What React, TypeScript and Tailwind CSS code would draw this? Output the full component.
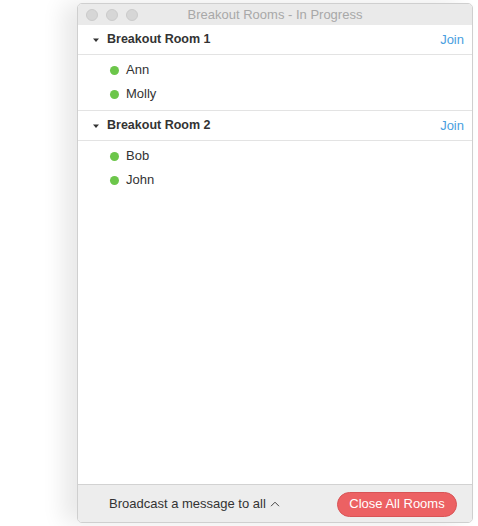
const font = { fontFamily: '"Liberation Sans", Arial, sans-serif' };

const rooms = [
  { name: 'Breakout Room 1', members: ['Ann', 'Molly'] },
  { name: 'Breakout Room 2', members: ['Bob', 'John'] },
];

function Caret() {
  return (
    <svg width="8" height="6" viewBox="0 0 8 6" className="mr-[7px]">
      <path d="M1 1.5h6L4 5z" fill="#333" />
    </svg>
  );
}

export default function App() {
  return (
    <div className="w-[478px] h-[526px] bg-white pt-[3px] pl-[77px]" style={font}>
      <div className="w-[396px] h-[520px] flex flex-col rounded-[5px] overflow-hidden border border-[#cfcfcf] bg-white shadow-[-14px_0_22px_rgba(0,0,0,0.09)]">
        {/* title bar */}
        <div className="relative h-[21px] bg-[#eaeaea] flex items-center shrink-0">
          <div className="flex gap-[8px] pl-[8px]">
            <span className="w-[12px] h-[12px] rounded-full bg-[#d6d6d6] border border-[#cbcbcb]" />
            <span className="w-[12px] h-[12px] rounded-full bg-[#d6d6d6] border border-[#cbcbcb]" />
            <span className="w-[12px] h-[12px] rounded-full bg-[#d6d6d6] border border-[#cbcbcb]" />
          </div>
          <div className="absolute inset-0 flex items-center justify-center text-[13px] text-[#a8a8a8]">
            Breakout Rooms - In Progress
          </div>
        </div>

        <div className="flex-1 flex flex-col">
          {rooms.map((room, i) => (
            <div key={room.name} className={i > 0 ? 'border-t border-[#e3e3e3]' : ''}>
              <div className="h-[30px] flex items-center pl-[14px] pr-[8px] border-b border-[#e3e3e3]">
                <Caret />
                <span className="text-[12.5px] font-bold text-[#333]">{room.name}</span>
                <span className="ml-auto text-[13px] text-[#4a9ee0]">Join</span>
              </div>
              <div className="pt-[3px] pb-[4px]">
                {room.members.map((m) => (
                  <div key={m} className="h-[24px] flex items-center pl-[32px]">
                    <span className="w-[9px] h-[9px] rounded-full bg-[#6cc64a] mr-[7px]" />
                    <span className="text-[13px] text-[#333]">{m}</span>
                  </div>
                ))}
              </div>
            </div>
          ))}
        </div>

        {/* footer */}
        <div className="h-[38px] shrink-0 bg-[#ededed] border-t border-[#d2d2d2] flex items-center pl-[31px] pr-[15px] pt-[1px]">
          <span className="text-[13px] text-[#333]">Broadcast a message to all</span>
          <svg width="10" height="6" viewBox="0 0 10 6" className="ml-[4px]">
            <path d="M1 5.2L5 1.2l4 4" fill="none" stroke="#444" strokeWidth="1" />
          </svg>
          <button className="ml-auto h-[25px] w-[120px] rounded-full bg-[#ec6163] border border-[#d85456] text-white text-[13px]">
            Close All Rooms
          </button>
        </div>
      </div>
    </div>
  );
}
